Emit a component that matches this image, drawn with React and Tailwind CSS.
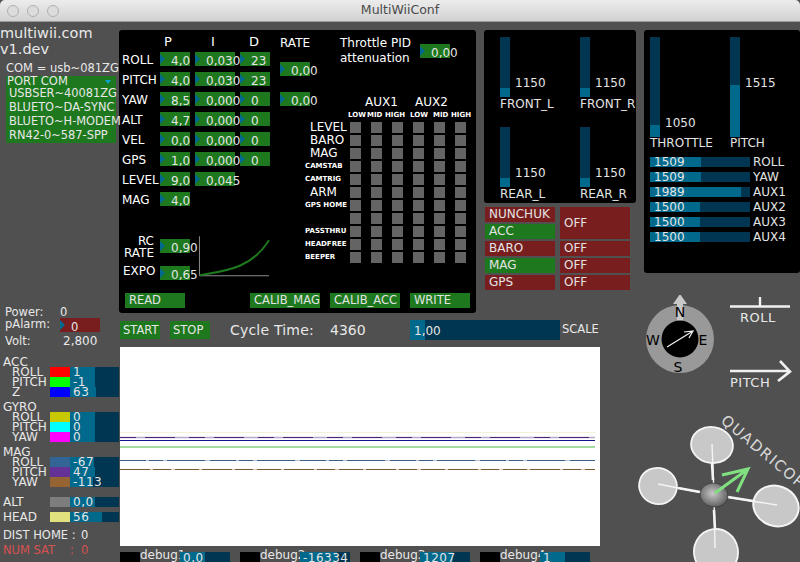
const GREEN = 'bg-[#1e781e]';

function Knob({ value, w = 'w-[30px]', className = '' }) {
    return (
        <div className={`relative h-[14px] shrink-0 ${GREEN} ${w} ${className}`}>
            <span className="absolute left-0 top-[2px] h-0 w-0 border-y-[5px] border-l-[5px] border-y-transparent border-l-[#00698c]"></span>
            <span className="absolute left-[11px] top-[2px] z-10 text-[12px] leading-[14px] whitespace-nowrap text-[#e4e4e4]">{value}</span>
        </div>
    );
}

function Btn({ label, w, className = '' }) {
    return (
        <div className={`${GREEN} ${w} h-[15px] pl-[4px] text-[11.5px] leading-[15px] text-[#e4e4e4] whitespace-nowrap ${className}`}>{label}</div>
    );
}

function PidRow({ label, p, i, d }) {
    return (
        <div className="flex h-[14px] mb-[6px]">
            <div className="w-[41px] pl-[3px] text-[12px] leading-[16px] whitespace-nowrap text-white">{label}</div>
            <Knob value={p} />
            {i && <Knob value={i} w="w-[40px]" className="ml-[5px]" />}
            {d && <Knob value={d} className="ml-[5px]" />}
        </div>
    );
}

const pidRows = [
    ['ROLL', '4,0', '0,030', '23'],
    ['PITCH', '4,0', '0,030', '23'],
    ['YAW', '8,5', '0,000', '0'],
    ['ALT', '4,7', '0,000', '0'],
    ['VEL', '0,0', '0,000', '0'],
    ['GPS', '1,0', '0,000', '0'],
    ['LEVEL', '9,0', '0,045', ''],
    ['MAG', '4,0', '', ''],
];

const auxRows = [
    ['LEVEL', false], ['BARO', false], ['MAG', false], ['CAMSTAB', true], ['CAMTRIG', true], ['ARM', false],
    ['GPS HOME', true], ['', true], ['PASSTHRU', true], ['HEADFREE', true], ['BEEPER', true],
];

function AuxRow({ label, small }) {
    return (
        <div className="flex h-[13px] items-center">
            <div className={`mr-[5px] w-[40px] whitespace-nowrap text-white ${small ? 'text-[7px] font-bold leading-[11px]' : 'pl-[5px] text-[12px] leading-[13px]'}`}>{label}</div>
            <div className="grid grid-cols-6 gap-x-[10px]">
                {[0, 1, 2, 3, 4, 5].map((n) => (
                    <span key={n} className="block h-[11px] w-[11px] bg-[#646464]"></span>
                ))}
            </div>
        </div>
    );
}

function Motor({ value, name }) {
    return (
        <div className="h-[90px]">
            <div className="flex h-[60px] items-center">
                <div className="flex h-[60px] w-[10px] flex-col justify-end bg-[#003652]">
                    <div className="h-[9px] bg-[#00698c]"></div>
                </div>
                <span className="ml-[5px] mt-[32px] text-[12px] text-[#e4e4e4]">{value}</span>
            </div>
            <div className="text-[12px] leading-[14px] whitespace-nowrap text-[#e4e4e4]">{name}</div>
        </div>
    );
}

function StatusRow({ name, on }) {
    return (
        <div className="flex gap-x-[5px]">
            <div className={`h-[15px] w-[70px] pl-[4px] text-[12px] leading-[15px] text-[#e4e4e4] ${on ? GREEN : 'bg-[#781e1e]'}`}>{name}</div>
            <div className="h-[15px] w-[70px] bg-[#781e1e] pl-[4px] text-[12px] leading-[15px] text-[#e4e4e4]">OFF</div>
        </div>
    );
}

function RcSlider({ value, pct, name }) {
    return (
        <div className="flex h-[15px]">
            <div className="relative h-[10px] w-[100px] bg-[#003652]">
                <div className="h-full bg-[#00698c]" style={{ width: pct + '%' }}></div>
                <span className="absolute left-[4px] top-[-1px] text-[12px] leading-[12px] text-[#e4e4e4]">{value}</span>
            </div>
            <span className="ml-[3px] text-[12px] leading-[11px] text-[#e4e4e4]">{name}</span>
        </div>
    );
}

function SensorBar({ value, fill }) {
    return (
        <div className="relative h-[10px] w-[49px] bg-[#003652]">
            <div className="h-full bg-[#00698c]" style={{ width: fill }}></div>
            <span className="absolute left-[3px] top-0 text-[12px] leading-[11px] tracking-[0.5px] whitespace-nowrap text-[#e4e4e4]">{value}</span>
        </div>
    );
}

function SensorGroup({ title, rows, className = '' }) {
    return (
        <div className={className}>
            <div className="pl-[3px] text-[12px] leading-[10px] text-[#e8e8e8]">{title}</div>
            {rows.map((r) => (
                <div key={r.name} className="flex h-[10px]">
                    <div className="w-[50px] pl-[12px] text-[12px] leading-[10px] text-[#e8e8e8]">{r.name}</div>
                    <span className={`h-[10px] w-[20px] ${r.color}`}></span>
                    <SensorBar value={r.value} fill={r.fill} />
                </div>
            ))}
        </div>
    );
}

function Debug({ name, value, fill }) {
    return (
        <div className="flex h-[10px] w-[110px] shrink-0">
            <span className="h-[10px] w-[20px] bg-black"></span>
            <div className="mt-[-2px] w-[40px] text-[12px] leading-[10px] text-[#e8e8e8]">{name}</div>
            <div className="relative h-[10px] w-[50px] bg-[#003652]">
                <div className="h-full bg-[#00698c]" style={{ width: fill }}></div>
                <span className="absolute left-[3px] top-0 text-[12px] leading-[12px] tracking-[0.5px] whitespace-nowrap text-[#e4e4e4]">{value}</span>
            </div>
        </div>
    );
}

function Graph() {
    return (
        <svg width="480" height="199" viewBox="0 0 480 199" className="block bg-white">
            <line x1="0" y1="85.5" x2="475" y2="85.5" stroke="#f2f2d8" strokeWidth="1" />
            <line x1="0" y1="90.5" x2="475" y2="90.5" stroke="#b8a8cc" strokeWidth="1.6" />
            <line x1="0" y1="90.5" x2="475" y2="90.5" stroke="#4a2a78" strokeWidth="1" strokeDasharray="16 9 30 14" />
            <line x1="0" y1="93.5" x2="475" y2="93.5" stroke="#14148c" strokeWidth="1" />
            <line x1="0" y1="100" x2="475" y2="100" stroke="#a4dca4" strokeWidth="2" />
            <line x1="0" y1="113.5" x2="475" y2="113.5" stroke="#b4c4d4" strokeWidth="1.2" />
            <line x1="0" y1="113.5" x2="475" y2="113.5" stroke="#3a5f82" strokeWidth="1" strokeDasharray="26 3 14 4 38 5" />
            <line x1="0" y1="122.5" x2="475" y2="122.5" stroke="#dccbb4" strokeWidth="1.2" />
            <line x1="0" y1="122.5" x2="475" y2="122.5" stroke="#7a5a32" strokeWidth="1" strokeDasharray="30 3 18 4 24 3" />
        </svg>
    );
}

function Instruments() {
    return (
        <svg width="164" height="267" viewBox="636 295 164 267" className="block" style={{ fontFamily: '"DejaVu Sans", sans-serif' }}>
            <defs>
                <radialGradient id="hub" cx="45%" cy="45%" r="60%">
                    <stop offset="0%" stopColor="#c8c8c8" />
                    <stop offset="100%" stopColor="#5a5a5a" />
                </radialGradient>
            </defs>
            {/* compass */}
            <circle cx="680" cy="339" r="34" fill="#999999" />
            <path d="M680 294 L687 304 L683 304 L683 322 L677 322 L677 304 L673 304 Z" fill="#c8c8c8" />
            <circle cx="680" cy="339" r="18.5" fill="#000000" />
            <text x="680" y="317" textAnchor="middle" fontSize="14" fill="#000">N</text>
            <text x="653" y="345" textAnchor="middle" fontSize="14" fill="#000">W</text>
            <text x="703" y="345" textAnchor="middle" fontSize="14" fill="#000">E</text>
            <text x="678" y="372" textAnchor="middle" fontSize="14" fill="#000">S</text>
            <path d="M667 347 L693 331 M684 332 L693 331 L689 338" fill="none" stroke="#f0f0f0" strokeWidth="1.2" />
            {/* roll */}
            <path d="M730 306.5 H790 M760 297 V306" stroke="#f0f0f0" strokeWidth="2.4" fill="none" />
            <text x="740" y="322" fontSize="13" letterSpacing="0.5" fill="#e8e8e8">ROLL</text>
            {/* pitch */}
            <path d="M730 371 H789 M780 361 L790 371.5 L778 381" stroke="#f0f0f0" strokeWidth="2.6" fill="none" />
            <text x="730" y="387" fontSize="13" letterSpacing="0.5" fill="#e8e8e8">PITCH</text>
            {/* quad */}
            <text x="720" y="422" fontSize="15" letterSpacing="1.5" fill="#d8d8d8" transform="rotate(40 720 422)">QUADRICOPTER</text>
            <ellipse cx="712" cy="445" rx="21" ry="18" transform="rotate(10 712 445)" fill="#c8c8c8" stroke="#f4f4f4" strokeWidth="1.8" />
            <ellipse cx="658" cy="486" rx="19" ry="18" transform="rotate(20 658 486)" fill="#c8c8c8" stroke="#f4f4f4" strokeWidth="1.8" />
            <ellipse cx="776" cy="506" rx="23" ry="20" transform="rotate(20 776 506)" fill="#c8c8c8" stroke="#f4f4f4" strokeWidth="2" />
            <ellipse cx="716" cy="552" rx="22" ry="23" transform="rotate(-10 716 552)" fill="#c8c8c8" stroke="#f4f4f4" strokeWidth="1.8" />
            <path d="M712 444 L714 495 L715 548 M658 484 L714 495 L777 505" stroke="#f4f4f4" strokeWidth="1.4" fill="none" />
            <path d="M712 463 L713 480 M678 488 L700 492 M728 497 L753 501 M714 510 L715 530" stroke="#f4f4f4" strokeWidth="2.6" fill="none" />
            <ellipse cx="714" cy="495" rx="14" ry="12" transform="rotate(10 714 495)" fill="url(#hub)" stroke="#303030" strokeWidth="0.6" />
            <path d="M715 493 L748 469 M722 475 L748 469 L737 492" stroke="#80e080" strokeWidth="3" fill="none" />
        </svg>
    );
}

export default function App() {
    const accRows = [
        { name: 'ROLL', value: '1', fill: '51%', color: 'bg-[#ff0000]' },
        { name: 'PITCH', value: '-1', fill: '51%', color: 'bg-[#00ff00]' },
        { name: 'Z', value: '63', fill: '53%', color: 'bg-[#0000ff]' },
    ];
    const gyroRows = [
        { name: 'ROLL', value: '0', fill: '51%', color: 'bg-[#c8c800]' },
        { name: 'PITCH', value: '0', fill: '51%', color: 'bg-[#00ffff]' },
        { name: 'YAW', value: '0', fill: '51%', color: 'bg-[#ff00ff]' },
    ];
    const magRows = [
        { name: 'ROLL', value: '-67', fill: '49%', color: 'bg-[#326496]' },
        { name: 'PITCH', value: '47', fill: '52%', color: 'bg-[#643296]' },
        { name: 'YAW', value: '-113', fill: '47%', color: 'bg-[#966432]' },
    ];

    return (
        <div className="h-[562px] w-[800px] overflow-hidden bg-[#505050] font-['DejaVu_Sans',sans-serif]">
            {/* window title bar */}
            <div className="relative flex h-[22px] items-center justify-center rounded-t-[5px] border-b border-b-[#9a9a9a] bg-gradient-to-b from-[#ececec] to-[#d2d2d2]">
                <div className="absolute left-[7px] top-[5px] flex gap-x-[8px]">
                    <span className="h-[12px] w-[12px] rounded-full border border-[#b0b0b0] bg-[#dcdcdc]"></span>
                    <span className="h-[12px] w-[12px] rounded-full border border-[#b0b0b0] bg-[#dcdcdc]"></span>
                    <span className="h-[12px] w-[12px] rounded-full border border-[#b0b0b0] bg-[#dcdcdc]"></span>
                </div>
                <span className="text-[12.5px] text-[#4a4a4a]">MultiWiiConf</span>
            </div>

            <div className="flex h-[540px]">
                {/* left column */}
                <div className="relative z-10 w-[119px] shrink-0 text-[#e8e8e8]">
                    <div className="pt-[3px] text-[14.5px] leading-[16px]">multiwii.com</div>
                    <div className="text-[14.5px] leading-[16px]">v1.dev</div>
                    <div className="pl-[6px] pt-[3px] text-[11.5px] leading-[16px] whitespace-nowrap">COM = usb~081ZG</div>
                    <div className="ml-[6px] w-[110px]">
                        <div className={`relative h-[11px] pl-[1px] text-[11.5px] leading-[11px] ${GREEN}`}>
                            PORT COM
                            <span className="absolute right-[5px] top-[4px] h-0 w-0 border-x-[3px] border-t-[4px] border-x-transparent border-t-[#08a2cf]"></span>
                        </div>
                        {['USBSER~40081ZG', 'BLUETO~DA-SYNC', 'BLUETO~H-MODEM', 'RN42-0~587-SPP'].map((p) => (
                            <div key={p} className={`h-[14px] pl-[3px] text-[11.4px] leading-[13px] whitespace-nowrap ${GREEN}`}>{p}</div>
                        ))}
                    </div>

                    <div className="mt-[162px] pl-[5px] text-[11.5px]">
                        <div className="flex h-[13px] leading-[14px]"><span className="w-[55px]">Power:</span><span>0</span></div>
                        <div className="flex h-[14px] items-center">
                            <span className="w-[55px]">pAlarm:</span>
                            <div className="relative h-[14px] w-[40px] bg-[#781e1e]">
                                <span className="absolute left-0 top-[2px] h-0 w-0 border-y-[5px] border-l-[5px] border-y-transparent border-l-[#00698c]"></span>
                                <span className="absolute left-[11px] top-[1px]">0</span>
                            </div>
                        </div>
                        <div className="flex h-[16px] pt-[2px] leading-[14px]"><span className="w-[58px]">Volt:</span><span className="text-[12px]">2,800</span></div>
                    </div>

                    <SensorGroup title="ACC" rows={accRows} className="mt-[9px]" />
                    <SensorGroup title="GYRO" rows={gyroRows} className="mt-[5px]" />
                    <SensorGroup title="MAG" rows={magRows} className="mt-[5px]" />

                    <div className="mt-[10px] flex h-[10px]">
                        <div className="w-[50px] pl-[3px] text-[12px] leading-[10px]">ALT</div>
                        <span className="h-[10px] w-[20px] bg-[#7d7d7d]"></span>
                        <SensorBar value="0,0" fill="51%" />
                    </div>
                    <div className="mt-[5px] flex h-[10px]">
                        <div className="w-[50px] pl-[3px] text-[12px] leading-[10px]">HEAD</div>
                        <span className="h-[10px] w-[20px] bg-[#e1e17d]"></span>
                        <SensorBar value="56" fill="65%" />
                    </div>

                    <div className="mt-[6px] flex pl-[3px] text-[11.5px] leading-[15px] whitespace-nowrap"><span className="w-[78px]">DIST HOME :</span><span>0</span></div>
                    <div className="flex pl-[3px] text-[11.5px] leading-[15px] whitespace-nowrap text-[#d85050]"><span className="w-[67px]">NUM SAT</span><span className="w-[11px]">:</span><span>0</span></div>
                </div>

                {/* center column */}
                <div className="w-[517px] shrink-0 pt-[8px]">
                    <div className="flex">
                        {/* PID panel */}
                        <div className="flex h-[283px] w-[357px] shrink-0 flex-col rounded-[3px] bg-black">
                            <div className="flex h-[263px]">
                                <div className="w-[151px] shrink-0 pt-[5px]">
                                    <div className="flex h-[17px] text-[13px] leading-[14px] text-white">
                                        <span className="ml-[45px] w-[47px]">P</span>
                                        <span className="w-[38px]">I</span>
                                        <span>D</span>
                                    </div>
                                    {pidRows.map((r) => (
                                        <PidRow key={r[0]} label={r[0]} p={r[1]} i={r[2]} d={r[3]} />
                                    ))}
                                    <div className="mt-[33px] flex">
                                        <div className="mt-[-4px] w-[41px] shrink-0 pr-[6px]">
                                            <div className="text-right text-[12px] leading-[12px] text-white">RC</div>
                                            <div className="text-right text-[12px] leading-[12px] text-white">RATE</div>
                                            <div className="pl-[4px] pt-[5px] text-[12px] leading-[14px] text-white">EXPO</div>
                                        </div>
                                        <div>
                                            <Knob value="0,90" />
                                            <Knob value="0,65" className="mt-[13px]" />
                                        </div>
                                        <svg width="74" height="44" viewBox="197 242 74 44" className="ml-[7px] mt-[-3px] block">
                                            <path d="M199.5 242 V282 H270" stroke="#8c8c8c" strokeWidth="1" fill="none" />
                                            <path d="M200 281.5 C225 277 252 275 270 246" stroke="#1e781e" strokeWidth="2" fill="none" />
                                        </svg>
                                    </div>
                                </div>

                                <div className="w-[60px] shrink-0 pl-[10px] pt-[5px]">
                                    <div className="h-[27px] pt-[1px] text-[12px] leading-[14px] text-white">RATE</div>
                                    <Knob value="0,00" />
                                    <Knob value="0,00" className="mt-[16px]" />
                                </div>

                                <div className="w-[146px] shrink-0 pt-[5px]">
                                    <div className="flex pl-[10px]">
                                        <div className="w-[68px] pt-[1px] text-center text-[12px] leading-[15px] whitespace-nowrap text-white">Throttle PID<br />attenuation</div>
                                        <Knob value="0,00" className="ml-[12px] mt-[9px]" />
                                    </div>
                                    <div className="ml-[-25px] mt-[30px] w-[171px]">
                                        <div className="flex h-[13px] pl-[60px] text-[12px] leading-[13px] text-white">
                                            <span className="w-[50px]">AUX1</span>
                                            <span>AUX2</span>
                                        </div>
                                        <div className="flex h-[12px] pl-[43px] text-[7px] font-bold leading-[12px] text-white">
                                            <span className="w-[19px]">LOW</span><span className="w-[18px]">MID</span><span className="w-[25px]">HIGH</span>
                                            <span className="w-[23px]">LOW</span><span className="w-[18px]">MID</span><span>HIGH</span>
                                        </div>
                                        {auxRows.map((a, idx) => (
                                            <AuxRow key={idx} label={a[0]} small={a[1]} />
                                        ))}
                                    </div>
                                </div>
                            </div>
                            <div className="flex pl-[6px]">
                                <Btn label="READ" w="w-[60px]" />
                                <Btn label="CALIB_MAG" w="w-[70px]" className="ml-[65px]" />
                                <Btn label="CALIB_ACC" w="w-[70px]" className="ml-[10px]" />
                                <Btn label="WRITE" w="w-[60px]" className="ml-[10px]" />
                            </div>
                        </div>

                        {/* motors and status */}
                        <div className="ml-[8px] w-[152px]">
                            <div className="grid h-[173px] grid-cols-[80px_1fr] rounded-[3px] bg-black pl-[16px] pt-[7px]">
                                <Motor value="1150" name="FRONT_L" />
                                <Motor value="1150" name="FRONT_R" />
                                <Motor value="1150" name="REAR_L" />
                                <Motor value="1150" name="REAR_R" />
                            </div>
                            <div className="ml-[1px] mt-[4px] flex flex-col gap-y-[2px]">
                                <div className="flex gap-x-[5px]">
                                    <div className="flex flex-col gap-y-[2px]">
                                        <div className="h-[15px] w-[70px] bg-[#781e1e] pl-[4px] text-[12px] leading-[15px] text-[#e4e4e4]">NUNCHUK</div>
                                        <div className={`h-[15px] w-[70px] pl-[4px] text-[12px] leading-[15px] text-[#e4e4e4] ${GREEN}`}>ACC</div>
                                    </div>
                                    <div className="h-[32px] w-[70px] bg-[#781e1e] pl-[4px] text-[12px] leading-[32px] text-[#e4e4e4]">OFF</div>
                                </div>
                                <StatusRow name="BARO" />
                                <StatusRow name="MAG" on />
                                <StatusRow name="GPS" />
                            </div>
                        </div>
                    </div>

                    {/* start / stop row */}
                    <div className="flex h-[34px] items-center pl-[1px] text-[#e8e8e8]">
                        <div className={`h-[18px] w-[40px] pl-[3px] text-[11.5px] leading-[18px] ${GREEN}`}>START</div>
                        <div className={`ml-[10px] h-[18px] w-[40px] pl-[3px] text-[11.5px] leading-[18px] ${GREEN}`}>STOP</div>
                        <span className="ml-[20px] w-[100px] text-[14px] tracking-[0.2px]">Cycle Time:</span>
                        <span className="w-[80px] text-[14px]">4360</span>
                        <div className="relative h-[20px] w-[150px] bg-[#003652]">
                            <div className="h-full w-[15px] bg-[#00698c]"></div>
                            <span className="absolute left-[4px] top-[2px] text-[12px]">1,00</span>
                        </div>
                        <span className="ml-[2px] text-[11.5px]">SCALE</span>
                    </div>

                    <div className="ml-[1px]"><Graph /></div>

                    <div className="ml-[1px] mt-[6px] flex gap-x-[10px]">
                        <Debug name="debug1" value="0,0" fill="50%" />
                        <Debug name="debug2" value="-16334" fill="74%" />
                        <Debug name="debug3" value="1207" fill="66%" />
                        <Debug name="debug4" value="1" fill="50%" />
                    </div>
                </div>

                {/* right column */}
                <div className="w-[164px] shrink-0 pt-[8px]">
                    <div className="ml-[8px] h-[243px] w-[156px] rounded-[3px] bg-black pl-[6px] pt-[7px] text-[#e4e4e4]">
                        <div className="flex h-[120px]">
                            <div className="w-[80px]">
                                <div className="flex h-[100px]">
                                    <div className="flex h-[100px] w-[10px] flex-col justify-end bg-[#003652]"><div className="h-[12px] bg-[#00698c]"></div></div>
                                    <span className="ml-[5px] mt-[77px] text-[12px]">1050</span>
                                </div>
                                <div className="mt-[-1px] text-[12px] leading-[14px]">THROTTLE</div>
                            </div>
                            <div className="w-[70px]">
                                <div className="flex h-[100px]">
                                    <div className="flex h-[100px] w-[10px] flex-col justify-end bg-[#003652]"><div className="h-[52px] bg-[#00698c]"></div></div>
                                    <span className="ml-[5px] mt-[37px] text-[12px]">1515</span>
                                </div>
                                <div className="mt-[-1px] text-[12px] leading-[14px]">PITCH</div>
                            </div>
                        </div>
                        <RcSlider value="1509" pct={51} name="ROLL" />
                        <RcSlider value="1509" pct={51} name="YAW" />
                        <RcSlider value="1989" pct={91} name="AUX1" />
                        <RcSlider value="1500" pct={50} name="AUX2" />
                        <RcSlider value="1500" pct={50} name="AUX3" />
                        <RcSlider value="1500" pct={50} name="AUX4" />
                    </div>
                    <div className="mt-[22px]"><Instruments /></div>
                </div>
            </div>
        </div>
    );
}
